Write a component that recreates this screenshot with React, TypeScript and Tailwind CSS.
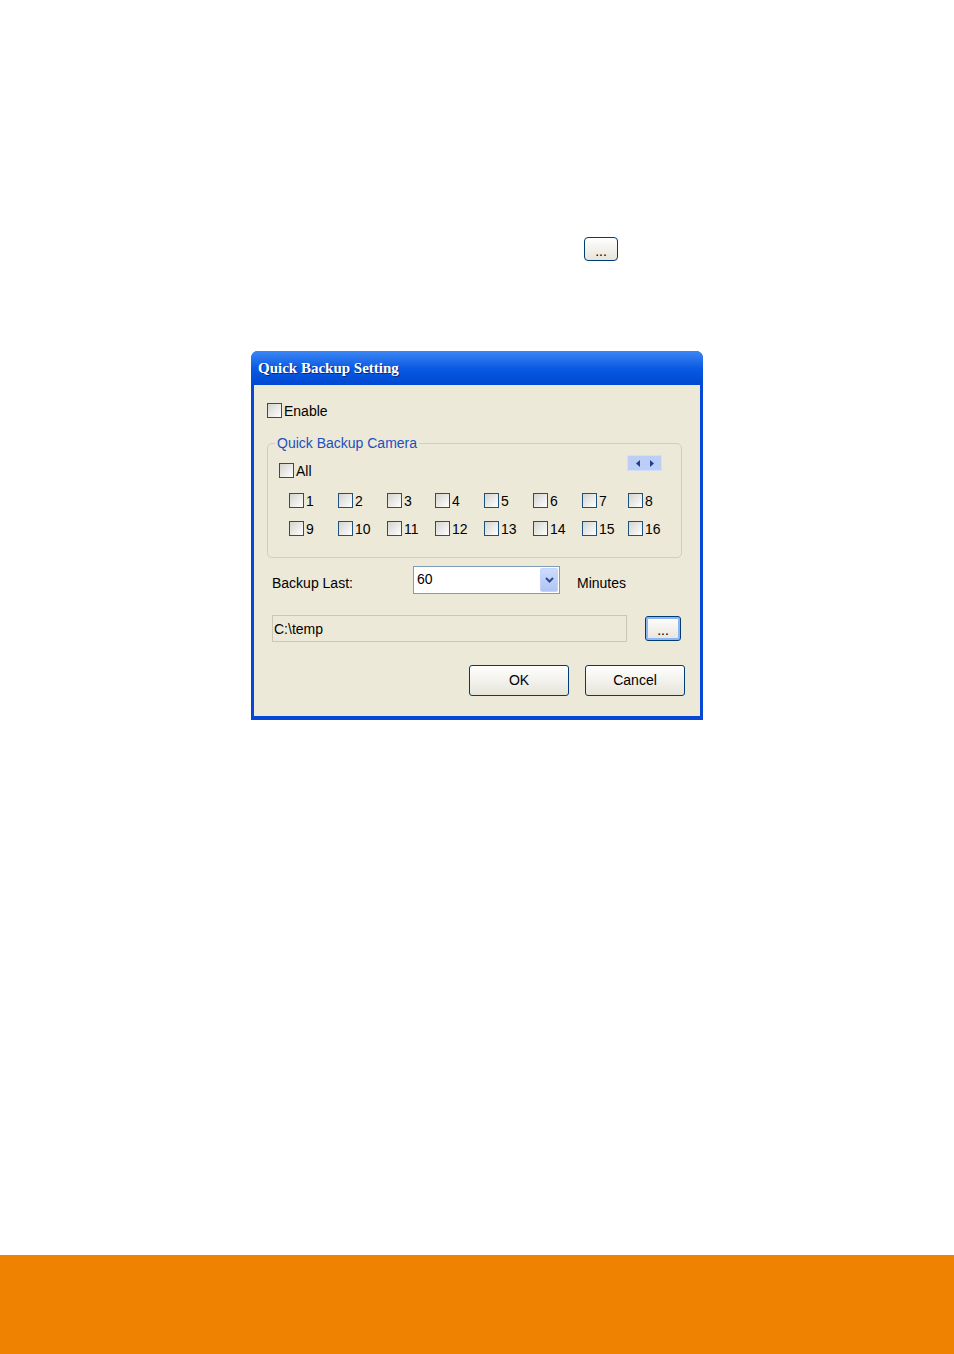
const font = { fontFamily: '"Liberation Sans", Arial, sans-serif' }

function Check({ label }: { label?: string }) {
  return (
    <div className="flex items-center h-[15px]">
      <span className="w-[15px] h-[15px] border border-[#1c5180] bg-gradient-to-br from-[#d4d4cf] to-white shrink-0" />
      {label && <span className="ml-[2px] text-[14px] leading-none text-black">{label}</span>}
    </div>
  )
}

function XpButton({ children, className }: { children: React.ReactNode; className: string }) {
  return (
    <div
      className={`flex items-center justify-center rounded-[3px] border border-[#003c74] bg-gradient-to-b from-white to-[#e6e4da] text-[14px] text-black ${className}`}
    >
      {children}
    </div>
  )
}

export default function App() {
  const cols = [
    ['1', '9'],
    ['2', '10'],
    ['3', '11'],
    ['4', '12'],
    ['5', '13'],
    ['6', '14'],
    ['7', '15'],
    ['8', '16'],
  ]

  return (
    <div className="w-[954px] h-[1354px] bg-white flex flex-col" style={font}>
      {/* small browse button in the text */}
      <div className="pt-[237px] pl-[584px]">
        <XpButton className="w-[34px] h-[24px] rounded-[4px] pt-[4px]">...</XpButton>
      </div>

      {/* dialog */}
      <div className="mt-[90px] ml-[251px] w-[452px] h-[369px] rounded-t-[7px] bg-[#0846d6] flex flex-col">
        <div className="h-[34px] rounded-t-[7px] bg-gradient-to-b from-[#3b86f4] via-[#0a5ae4] to-[#0048d0] flex items-center pl-[7px]">
          <span
            className="text-white font-bold text-[15px] [text-shadow:1px_1px_0_#0a2c80]"
            style={{ fontFamily: '"Liberation Serif", "Times New Roman", serif' }}
          >
            Quick Backup Setting
          </span>
        </div>

        <div className="mx-[3px] mb-[4px] flex-1 bg-[#ece9d8] pl-[13px] pr-[18px] pt-[18px] flex flex-col">
          <Check label="Enable" />

          <fieldset className="mt-[17px] w-[415px] h-[123px] border border-[#d0cebf] rounded-[5px] pl-[11px] pr-[19px]">
            <legend className="ml-[-4px] px-[2px] text-[14px] leading-[16px] text-[#1c4fbf]">Quick Backup Camera</legend>
            <div className="mt-[4px] flex items-start justify-between">
              <div className="mt-[8px]">
                <Check label="All" />
              </div>
              <div className="w-[35px] h-[16px] bg-[#bccef6] border border-[#d3dffa] flex items-center justify-center gap-[8px]">
                <svg width="5" height="7" viewBox="0 0 5 7">
                  <path d="M4 0L0 3.5L4 7Z" fill="#1f3f8f" />
                </svg>
                <svg width="5" height="7" viewBox="0 0 5 7">
                  <path d="M1 0L5 3.5L1 7Z" fill="#1f3f8f" />
                </svg>
              </div>
            </div>
            <div className="mt-[15px] ml-[10px] grid grid-cols-[49px_49px_48px_49px_49px_49px_46px_auto] gap-y-[13px]">
              {[0, 1].map((r) =>
                cols.map((c) => <Check key={c[r]} label={c[r]} />)
              )}
            </div>
          </fieldset>

          <div className="mt-[8px] ml-[5px] flex items-center">
            <span className="w-[141px] mt-[6px] text-[14px] text-black">Backup Last:</span>
            <div className="w-[147px] h-[28px] border border-[#7f9db9] bg-white flex items-center justify-between pl-[3px] pr-[1px]">
              <span className="text-[14px] text-black -mt-[1px]">60</span>
              <div className="w-[18px] h-[24px] rounded-[2px] bg-gradient-to-b from-[#cfdcfb] to-[#aec5f5] border border-[#c3d3fb] flex items-center justify-center">
                <svg width="9" height="6" viewBox="0 0 9 6">
                  <path d="M1 1L4.5 4.5L8 1" stroke="#2a4c9c" strokeWidth="2" fill="none" />
                </svg>
              </div>
            </div>
            <span className="ml-[17px] mt-[6px] text-[14px] text-black">Minutes</span>
          </div>

          <div className="mt-[21px] ml-[5px] flex items-center">
            <div className="w-[355px] h-[27px] border border-[#c9c7ba] flex items-center pl-[1px]">
              <span className="text-[14px] text-black mt-[2px]">C:\temp</span>
            </div>
            <XpButton className="ml-[18px] w-[36px] h-[25px] rounded-[3px] shadow-[inset_0_0_0_2px_#8fb4f4] pt-[3px]">...</XpButton>
          </div>

          <div className="mt-[23px] flex justify-end gap-[16px] mr-[-3px]">
            <XpButton className="w-[100px] h-[31px]">OK</XpButton>
            <XpButton className="w-[100px] h-[31px]">Cancel</XpButton>
          </div>
        </div>
      </div>

      <div className="mt-auto h-[99px] bg-[#ef8200]" />
    </div>
  )
}
